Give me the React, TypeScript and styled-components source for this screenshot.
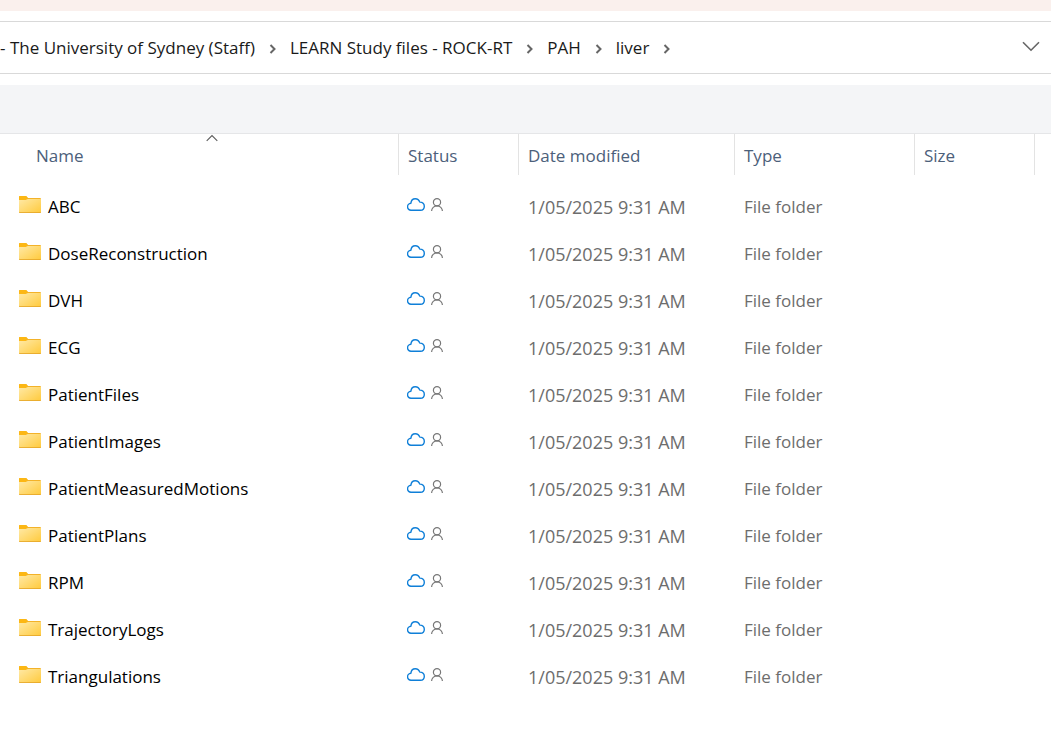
import React from "react";
import styled, { createGlobalStyle } from "styled-components";

const GlobalStyle = createGlobalStyle`
  *, *::before, *::after { box-sizing: border-box; }
  body {
    margin: 0;
    background: #ffffff;
    color: #000000;
    font-family: "Segoe UI", "Open Sans", "Noto Sans", sans-serif;
    font-size: 17px;
    line-height: 24px;
  }
  button { font: inherit; color: inherit; background: none; border: 0; padding: 0; }
`;

const Window = styled.main`
  overflow-x: hidden;
`;

const TitleStrip = styled.div`
  height: 11px;
  margin-bottom: 10px;
  background: #faf0ed;
`;

const AddressBar = styled.nav`
  display: flex;
  align-items: center;
  justify-content: space-between;
  height: 53px;
  padding-right: 11px;
  border-top: 1px solid #d9d9d9;
  border-bottom: 1px solid #d9d9d9;
  margin-bottom: 11px;
`;

const Crumbs = styled.ol`
  display: flex;
  margin: 0;
  padding: 0;
  list-style: none;
  white-space: nowrap;
`;

const Crumb = styled.li`
  display: flex;
  align-items: center;
`;

const CrumbLink = styled.a`
  color: #1a1a1a;
  text-decoration: none;
`;

const CrumbArrow = styled.svg`
  width: 7px;
  height: 10px;
  margin: 2px 14px 0;
`;

const HistoryButton = styled.button`
  display: flex;
  padding-bottom: 2px;
`;

const CommandBar = styled.div`
  height: 49px;
  background: #f4f5f7;
  border-bottom: 1px solid #e5e6e8;
`;

const FileTable = styled.table`
  width: 100%;
  table-layout: fixed;
  border-collapse: separate;
  border-spacing: 0;
`;

const Column = styled.col<{ $width?: number }>`
  width: ${(p) => (p.$width ? `${p.$width}px` : "auto")};
`;

const HeadCell = styled.th<{ $first?: boolean }>`
  height: 41px;
  padding: 0 0 0 ${(p) => (p.$first ? 26 : 9)}px;
  border-left: ${(p) => (p.$first ? "0" : "1px solid #e3e3e3")};
  color: #4c607a;
  font-weight: 400;
  text-align: left;
  vertical-align: top;
`;

const HeadButton = styled.button<{ $indent?: boolean }>`
  display: grid;
  grid-template-rows: 10px 24px;
  width: 100%;
  padding-left: ${(p) => (p.$indent ? 10 : 0)}px;
  text-align: left;
`;

const SortSlot = styled.span<{ $indent?: boolean }>`
  display: flex;
  justify-content: center;
  margin-left: ${(p) => (p.$indent ? -10 : 0)}px;
`;

const Body = styled.tbody`
  &::before {
    content: "";
    display: table-row;
    height: 8px;
  }
`;

const Cell = styled.td<{ $first?: boolean }>`
  height: 47px;
  padding: 0 0 0 ${(p) => (p.$first ? 19 : 10)}px;
  color: ${(p) => (p.$first ? "#000000" : "#6d6d6d")};
  white-space: nowrap;
`;

const DateCell = styled(Cell)`
  font-size: 18px;
`;

const NameContent = styled.span`
  display: flex;
  align-items: center;
  gap: 7px;
`;

const StatusContent = styled.span`
  display: flex;
  align-items: center;
  gap: 6px;
  margin-left: -1px;
  padding-bottom: 5px;
`;

const FolderSvg = styled.svg`
  flex: none;
  margin-bottom: 5px;
`;

const FolderIcon = () => (
  <FolderSvg width="22" height="17" viewBox="0 0 22 17" aria-hidden="true">
    <path d="M0 1Q0 0 1 0H6.500Q7.200 0 7.700.6L9 2H21Q22 2 22 3V6H0Z" fill="#f3b229" />
    <path d="M0 1Q0 0 1 0H6.500Q7.200 0 7.700.6L8.600 2L7.500 4H0Z" fill="#fcb714" />
    <path d="M0 4H6.800Q7.300 4 7.700 3.600Q8.200 3 9 3H22V16Q22 17 21 17H1Q0 17 0 16Z" fill="url(#folderFace)" />
    <path d="M0 15.800Q.3 16.200 1 16.200H21Q21.700 16.200 22 15.800V16Q22 17 21 17H1Q0 17 0 16Z" fill="#e3a325" />
  </FolderSvg>
);

const CloudIcon = () => (
  <svg width="18" height="13" viewBox="0 0 18 13" role="img" aria-label="Available when online">
    <path
      d="M4.200 12.300A3.500 3.500 0 0 1 3.900 5.300C4.100 2.600 6 .7 8.300 .7C10.400 .7 12.100 2 12.800 4.100C15.600 4 17.300 5.800 17.300 8.200C17.300 10.600 15.700 12.300 13.400 12.300Z"
      fill="none"
      stroke="#0f7fd8"
      strokeWidth="1.400"
      strokeLinejoin="round"
    />
  </svg>
);

const PersonIcon = () => (
  <svg width="12" height="13" viewBox="0 0 12 13" role="img" aria-label="Shared">
    <g fill="none" stroke="#777777" strokeWidth="1.200">
      <circle cx="6" cy="4.200" r="3.600" />
      <path d="M.6 13A5.400 5.200 0 0 1 11.400 13" />
    </g>
  </svg>
);

const crumbs = [
  "- The University of Sydney (Staff)",
  "LEARN Study files - ROCK-RT",
  "PAH",
  "liver",
];

const columns = ["Name", "Status", "Date modified", "Type", "Size"];
const widths = [398, 120, 216, 180, 120];

const folders = [
  "ABC",
  "DoseReconstruction",
  "DVH",
  "ECG",
  "PatientFiles",
  "PatientImages",
  "PatientMeasuredMotions",
  "PatientPlans",
  "RPM",
  "TrajectoryLogs",
  "Triangulations",
];

export default function App() {
  return (
    <Window>
      <GlobalStyle />
      <svg width="0" height="0" style={{ display: "block" }} aria-hidden="true">
        <defs>
          <linearGradient id="folderFace" x1="0" y1="0" x2="1" y2="1">
            <stop offset="0" stopColor="#ffe9a6" />
            <stop offset="1" stopColor="#ffca3c" />
          </linearGradient>
        </defs>
      </svg>
      <TitleStrip />
      <AddressBar aria-label="Folder path">
        <Crumbs>
          {crumbs.map((name) => (
            <Crumb key={name}>
              <CrumbLink href="#">{name}</CrumbLink>
              <CrumbArrow viewBox="0 0 7 10" aria-hidden="true">
                <path d="M1.500 1L5.500 5L1.500 9" fill="none" stroke="#666666" strokeWidth="2" />
              </CrumbArrow>
            </Crumb>
          ))}
        </Crumbs>
        <HistoryButton aria-label="Previous locations">
          <svg width="18" height="11" viewBox="0 0 18 11" aria-hidden="true">
            <path d="M1 1.200L9 9.200L17 1.200" fill="none" stroke="#666666" strokeWidth="1.600" />
          </svg>
        </HistoryButton>
      </AddressBar>
      <CommandBar />
      <FileTable>
        <colgroup>
          {widths.map((w, i) => (
            <Column key={i} $width={w} />
          ))}
          <Column />
        </colgroup>
        <thead>
          <tr>
            {columns.map((label, i) => (
              <HeadCell key={label} scope="col" $first={i === 0} aria-sort={i === 0 ? "ascending" : undefined}>
                <HeadButton $indent={i === 0}>
                  <SortSlot $indent={i === 0}>
                    {i === 0 && (
                      <svg width="12" height="8" viewBox="0 0 12 8" aria-hidden="true">
                        <path d="M.7 6.800L6 1.500L11.300 6.800" fill="none" stroke="#5c5c5c" strokeWidth="1.100" />
                      </svg>
                    )}
                  </SortSlot>
                  <span>{label}</span>
                </HeadButton>
              </HeadCell>
            ))}
            <HeadCell as="td" />
          </tr>
        </thead>
        <Body>
          {folders.map((name) => (
            <tr key={name}>
              <Cell $first>
                <NameContent>
                  <FolderIcon />
                  {name}
                </NameContent>
              </Cell>
              <Cell>
                <StatusContent>
                  <CloudIcon />
                  <PersonIcon />
                </StatusContent>
              </Cell>
              <DateCell>1/05/2025 9:31 AM</DateCell>
              <Cell>File folder</Cell>
              <Cell />
              <Cell />
            </tr>
          ))}
        </Body>
      </FileTable>
    </Window>
  );
}
